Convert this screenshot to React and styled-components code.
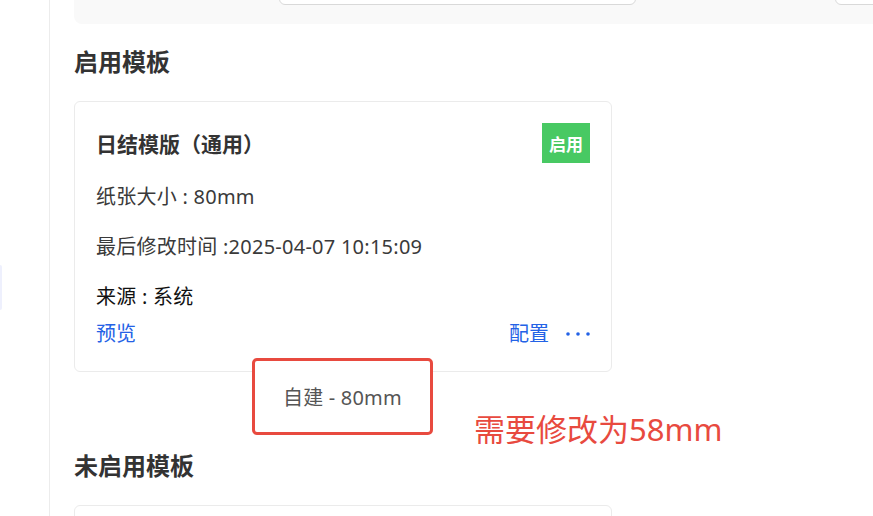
import React from "react";
import styled, { createGlobalStyle } from "styled-components";

const GlobalStyle = createGlobalStyle`
  html, body {
    margin: 0;
    padding: 0;
    background: #fff;
  }
  body {
    font-family: "Noto Sans", "Noto Sans CJK SC", sans-serif;
    color: #333;
    overflow: hidden;
  }
`;

const App = () => {
  return (
    <Page>
      <GlobalStyle />
      <Sidebar>
        <MenuItem />
      </Sidebar>
      <Main>
        <FilterBar>
          <FilterInput width="357px" />
          <FilterInput width="200px" />
        </FilterBar>

        <Section>
          <SectionTitle>启用模板</SectionTitle>
          <Card>
            <CardHeader>
              <CardTitle>日结模版（通用）</CardTitle>
              <Badge>启用</Badge>
            </CardHeader>
            <InfoLine>纸张大小 : 80mm</InfoLine>
            <InfoLine>最后修改时间 :2025-04-07 10:15:09</InfoLine>
            <InfoLine dark>来源 : 系统</InfoLine>
            <Actions>
              <LinkText>预览</LinkText>
              <RightActions>
                <LinkText>配置</LinkText>
                <svg width="24" height="6" viewBox="0 0 24 6">
                  <circle cx="2" cy="3" r="1.8" fill="#2462e6" />
                  <circle cx="12" cy="3" r="1.8" fill="#2462e6" />
                  <circle cx="22" cy="3" r="1.8" fill="#2462e6" />
                </svg>
              </RightActions>
            </Actions>

            <Popup>
              <PopupOption>自建 - 80mm</PopupOption>
            </Popup>
            <Note>需要修改为58mm</Note>
          </Card>
        </Section>

        <Section>
          <SectionTitle>未启用模板</SectionTitle>
          <Card />
        </Section>
      </Main>
    </Page>
  );
};

const Page = styled.div`
  display: flex;
  width: 1200px;
  height: 516px;
  overflow: hidden;
`;

const Sidebar = styled.div`
  width: 49px;
  flex-shrink: 0;
  border-right: 1px solid #ececec;
  padding-top: 265px;
  box-sizing: content-box;
`;

const MenuItem = styled.div`
  width: 2px;
  height: 45px;
  background: #eef0fd;
  border-radius: 0 4px 4px 0;
`;

const Main = styled.div`
  flex: 1;
  padding-left: 24px;
`;

const FilterBar = styled.div`
  display: flex;
  align-items: flex-end;
  gap: 199px;
  height: 24px;
  padding: 0 0 19px 205px;
  box-sizing: border-box;
  background: #f9f9f9;
  border-radius: 0 0 8px 8px;
  overflow: hidden;
`;

const FilterInput = styled.div`
  width: ${(p) => p.width};
  height: 36px;
  flex-shrink: 0;
  background: #fff;
  border: 1px solid #d9d9d9;
  border-radius: 6px;
  box-sizing: border-box;
`;

const Section = styled.div`
  padding-top: 22px;
  & + & {
    padding-top: 78px;
  }
`;

const SectionTitle = styled.h2`
  margin: 0 0 23px;
  font-size: 24px;
  line-height: 32px;
  font-weight: 700;
  color: #333;
`;

const Card = styled.div`
  position: relative;
  width: 538px;
  min-height: 120px;
  box-sizing: border-box;
  padding: 22px 21px 22px 21px;
  border: 1px solid #ebebeb;
  border-radius: 6px;
  background: #fff;
`;

const CardHeader = styled.div`
  display: flex;
  justify-content: space-between;
  align-items: center;
  height: 40px;
`;

const CardTitle = styled.div`
  margin-top: -3px;
  font-size: 21px;
  font-weight: 700;
  color: #333;
`;

const Badge = styled.div`
  width: 48px;
  height: 40px;
  margin-top: -2px;
  display: flex;
  align-items: center;
  justify-content: center;
  background: #48c963;
  color: #fff;
  font-size: 17px;
  font-weight: 700;
`;

const InfoLine = styled.div`
  margin-top: 20px;
  font-size: 20px;
  line-height: 30px;
  letter-spacing: 0.25px;
  color: ${(p) => (p.dark ? "#111" : "#3a3a3a")};

  &:nth-of-type(2) {
    margin-top: 18px;
  }
`;

const Actions = styled.div`
  display: flex;
  justify-content: space-between;
  align-items: center;
  margin-top: 7px;
  height: 30px;
`;

const RightActions = styled.div`
  display: flex;
  align-items: center;
  gap: 17px;
`;

const LinkText = styled.span`
  font-size: 20px;
  line-height: 30px;
  color: #2462e6;
`;

const Popup = styled.div`
  position: absolute;
  left: 177px;
  top: 256px;
  width: 181px;
  height: 77px;
  box-sizing: border-box;
  display: flex;
  align-items: center;
  padding-left: 28px;
  background: #fff;
  border: 3px solid #e84a3f;
  border-radius: 5px;
`;

const PopupOption = styled.span`
  font-size: 20px;
  letter-spacing: 0.2px;
  color: #555;
`;

const Note = styled.div`
  position: absolute;
  left: 399px;
  top: 305px;
  white-space: nowrap;
  font-size: 31px;
  line-height: 44px;
  color: #e84a3f;
`;

export default App;
